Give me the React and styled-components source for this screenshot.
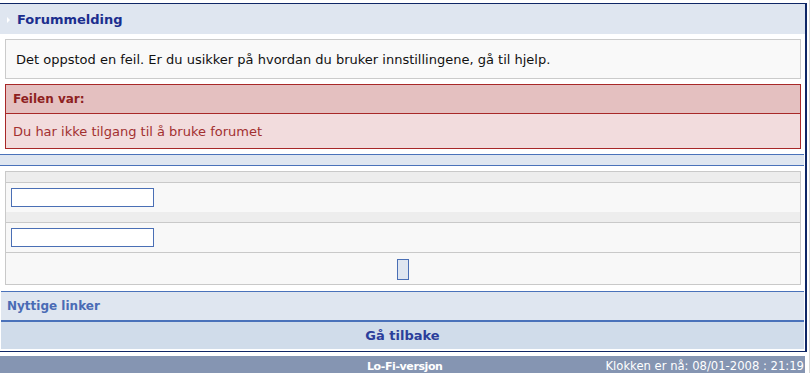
import React from "react";
import styled, { createGlobalStyle } from "styled-components";

const Global = createGlobalStyle`
    html, body {
        margin: 0;
        padding: 0;
        background: #ffffff;
    }
    body {
        font-family: "DejaVu Sans", Verdana, sans-serif;
        font-size: 13px;
    }
`;

const Page = styled.div`
    width: 809px;
    padding-top: 3px;
    border-right: 1px solid #d6d6d6;
    min-height: 370px;
`;

const Main = styled.div`
    width: 805px;
    border-top: 1px solid #0f2766;
    border-right: 2px solid #0f2766;
    border-bottom: 1px solid #0f2766;
    background: #ffffff;
    padding-bottom: 2px;
`;

const Header = styled.div`
    height: 30px;
    background: #dfe6f0;
    display: flex;
    align-items: center;
    padding-left: 7px;
    gap: 7px;
    color: #1b2e8e;
    font-weight: bold;
    font-size: 13px;
`;

const Bullet = styled.span`
    width: 0;
    height: 0;
    border-top: 3px solid transparent;
    border-bottom: 3px solid transparent;
    border-left: 3px solid #ffffff;
    margin-top: 2px;
`;

const Content = styled.div`
    padding: 5px 4px 0 5px;
    display: flex;
    flex-direction: column;
    gap: 5px;
`;

const MessageBox = styled.div`
    height: 38px;
    border: 1px solid #cbcbcb;
    background: #f9f9f9;
    display: flex;
    align-items: center;
    padding-left: 10px;
    color: #111111;
`;

const ErrorBox = styled.div`
    border: 1px solid #a82828;
    color: #8e1f1f;
`;

const ErrorHead = styled.div`
    height: 28px;
    background: #e4c0c0;
    border-bottom: 1px solid #a82828;
    display: flex;
    align-items: center;
    padding-left: 7px;
    font-weight: bold;
    font-size: 12px;
`;

const ErrorBody = styled.div`
    height: 34px;
    background: #f2dcdd;
    display: flex;
    align-items: center;
    padding-left: 7px;
    color: #a23030;
`;

const Band = styled.div`
    margin: 5px 1px 0 0;
    height: 10px;
    background: #dfe6f0;
    border-top: 1px solid #4a72ba;
    border-bottom: 1px solid #4a72ba;
`;

const FormTable = styled.div`
    margin: 5px 4px 0 5px;
    border: 1px solid #c9c9c9;
    background: #f8f8f8;
`;

const HeadRow = styled.div`
    height: 10px;
    background: #ededed;
    border-bottom: 1px solid #c9c9c9;
    & + & {
        border-top: 1px solid #c9c9c9;
    }
`;

const Row = styled.div`
    height: ${(p) => p.$h}px;
    display: flex;
    align-items: center;
    justify-content: ${(p) => (p.$center ? "center" : "flex-start")};
    padding-left: ${(p) => (p.$center ? 0 : 5)}px;
    & + & {
        border-top: 1px solid #c9c9c9;
    }
`;

const Field = styled.input`
    width: 139px;
    height: 15px;
    border: 1px solid #4a6fb5;
    background: #ffffff;
    padding: 1px;
    margin: 0;
    font-family: inherit;
    font-size: 12px;
`;

const SmallButton = styled.button`
    width: 12px;
    height: 21px;
    padding: 0;
    margin: 2px 0 0 0;
    border: 1px solid #4a6fb5;
    background: #dfe6f0;
`;

const Bar = styled.div`
    margin: ${(p) => p.$mt || 0}px 1px 0 1px;
    height: ${(p) => p.$h}px;
    background: ${(p) => p.$bg};
    display: flex;
    align-items: center;
    justify-content: ${(p) => (p.$center ? "center" : "flex-start")};
    padding-left: ${(p) => (p.$center ? 0 : 6)}px;
    font-weight: bold;
    font-size: ${(p) => p.$size || 13}px;
    color: ${(p) => p.$color};
    border-top: ${(p) => p.$top || "none"};
`;

const Footer = styled.div`
    margin-top: 4px;
    width: 805px;
    height: 18px;
    background: #8595b2;
    color: #ffffff;
    font-size: 11.6px;
    display: flex;
    align-items: center;
    justify-content: space-between;
    padding-top: 1px;
`;

const FooterLink = styled.span`
    font-weight: bold;
    font-size: 11px;
    letter-spacing: -0.4px;
    padding-left: 367px;
`;

const Clock = styled.span`
    padding-right: 1px;
`;

export default function App() {
    return (
        <>
            <Global />
            <Page>
                <Main>
                    <Header>
                        <Bullet />
                        Forummelding
                    </Header>
                    <Content>
                        <MessageBox>
                            Det oppstod en feil. Er du usikker på hvordan du bruker innstillingene, gå til hjelp.
                        </MessageBox>
                        <ErrorBox>
                            <ErrorHead>Feilen var:</ErrorHead>
                            <ErrorBody>Du har ikke tilgang til å bruke forumet</ErrorBody>
                        </ErrorBox>
                    </Content>
                    <Band />
                    <FormTable>
                        <HeadRow />
                        <Row $h={29}>
                            <Field type="text" />
                        </Row>
                        <HeadRow />
                        <Row $h={29}>
                            <Field type="password" />
                        </Row>
                        <Row $h={31} $center>
                            <SmallButton />
                        </Row>
                    </FormTable>
                    <Bar $mt={6} $h={28} $bg="#dfe6f0" $color="#4a6bb5" $size={12} $top="1px solid #4a72ba">
                        Nyttige linker
                    </Bar>
                    <Bar $h={27} $bg="#d0dcea" $color="#2b3e9b" $top="2px solid #4a72ba" $center>
                        Gå tilbake
                    </Bar>
                </Main>
                <Footer>
                    <FooterLink>Lo-Fi-versjon</FooterLink>
                    <Clock>Klokken er nå: 08/01-2008 : 21:19</Clock>
                </Footer>
            </Page>
        </>
    );
}
